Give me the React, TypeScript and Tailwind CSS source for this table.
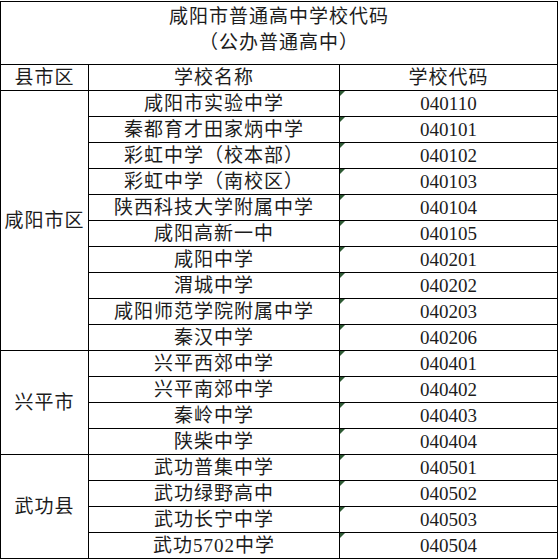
import React from "react";

type Group = { district: string; schools: [string, string][] };

const groups: Group[] = [
  {
    district: "咸阳市区",
    schools: [
      ["咸阳市实验中学", "040110"],
      ["秦都育才田家炳中学", "040101"],
      ["彩虹中学（校本部）", "040102"],
      ["彩虹中学（南校区）", "040103"],
      ["陕西科技大学附属中学", "040104"],
      ["咸阳高新一中", "040105"],
      ["咸阳中学", "040201"],
      ["渭城中学", "040202"],
      ["咸阳师范学院附属中学", "040203"],
      ["秦汉中学", "040206"],
    ],
  },
  {
    district: "兴平市",
    schools: [
      ["兴平西郊中学", "040401"],
      ["兴平南郊中学", "040402"],
      ["秦岭中学", "040403"],
      ["陕柴中学", "040404"],
    ],
  },
  {
    district: "武功县",
    schools: [
      ["武功普集中学", "040501"],
      ["武功绿野高中", "040502"],
      ["武功长宁中学", "040503"],
      ["武功5702中学", "040504"],
    ],
  },
];

const cell = "border border-black p-0 text-center align-middle";

export default function App() {
  return (
    <div className="h-[559px] w-[559px] overflow-hidden bg-white pt-[1px] text-[#1c1c1c]">
      <table className="w-[557px] table-fixed border-collapse font-['Liberation_Serif','Noto_Sans_CJK_SC',serif] text-[19px] leading-[25px] tracking-[1px]">
        <colgroup>
          <col className="w-[88px]" />
          <col className="w-[251px]" />
          <col className="w-[218px]" />
        </colgroup>
        <tbody>
          {/* ── Title ─────────────────────────────── */}
          <tr className="h-[61px]">
            <td colSpan={3} className={cell + " align-top pt-[2px] pb-[8px] leading-[26px]"}>
              <div>咸阳市普通高中学校代码</div>
              <div>（公办普通高中）</div>
            </td>
          </tr>

          {/* ── Header ────────────────────────────── */}
          <tr className="h-[26px]">
            <td className={cell}>县市区</td>
            <td className={cell}>学校名称</td>
            <td className={cell}>学校代码</td>
          </tr>

          {/* ── Rows ──────────────────────────────── */}
          {groups.map((g) =>
            g.schools.map(([name, code], i) => (
              <tr key={code} className="h-[26px]">
                {i === 0 && (
                  <td rowSpan={g.schools.length} className={cell}>
                    {g.district}
                  </td>
                )}
                <td className={cell}>{name}</td>
                <td className={cell + " relative tracking-normal"}>
                  <span className="absolute left-0 top-0 h-[5px] w-[5px] bg-[#2f5b35] [clip-path:polygon(0_0,100%_0,0_100%)]" />
                  {code}
                </td>
              </tr>
            ))
          )}
        </tbody>
      </table>
    </div>
  );
}
